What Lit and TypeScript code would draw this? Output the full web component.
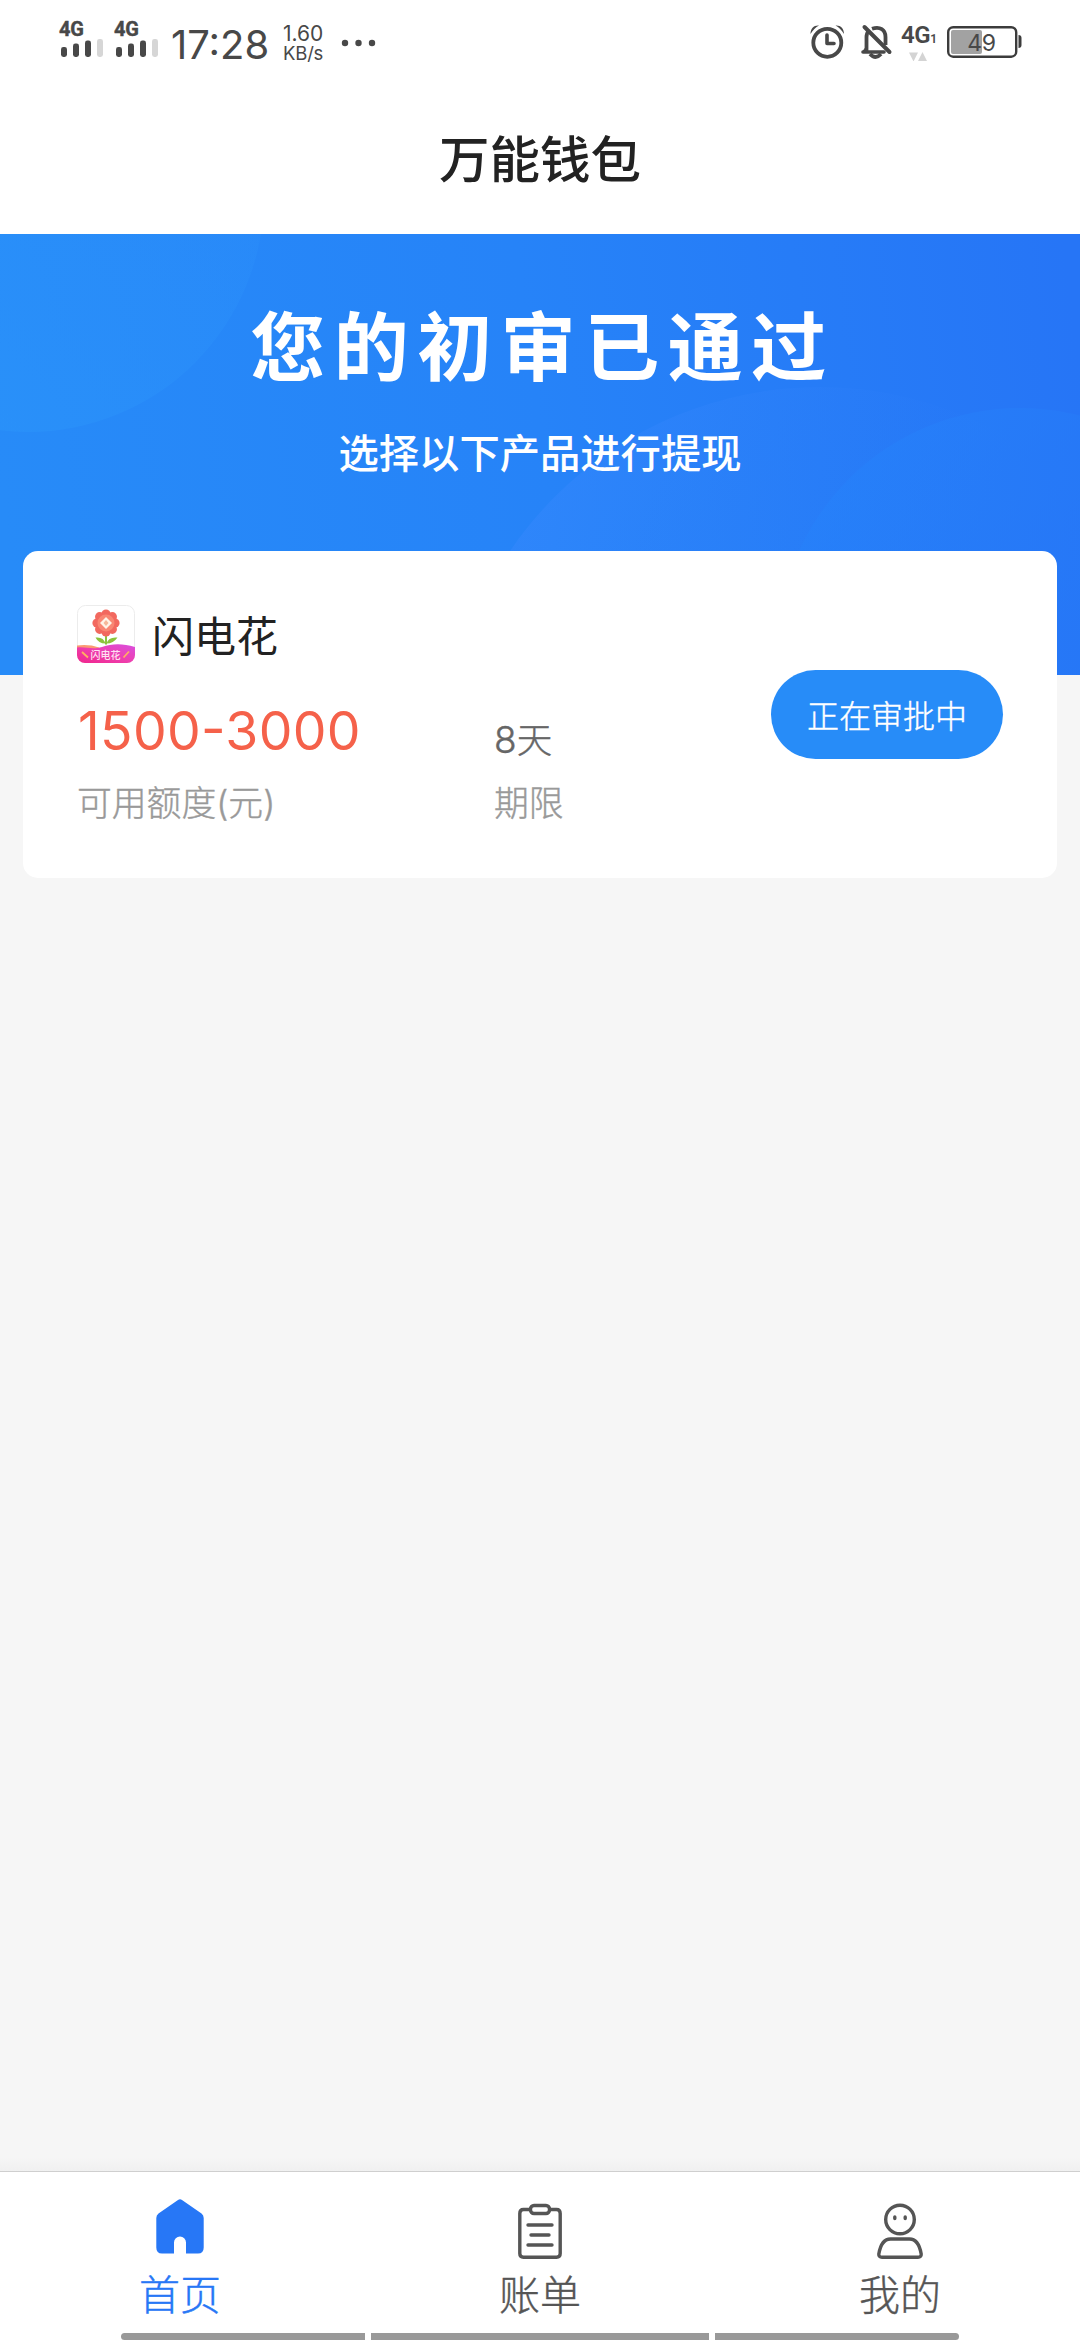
import { LitElement, html, css, svg } from "lit";
import { customElement, property } from "lit/decorators.js";

@customElement("status-bar")
class StatusBar extends LitElement {
  static styles = css`
    :host {
      display: flex;
      justify-content: space-between;
      height: 84px;
      padding: 0 58px 0 59px;
      box-sizing: border-box;
      color: #484848;
      font-family: Inter, Roboto, sans-serif;
    }
    .group { display: flex; align-items: flex-start; }
    svg { display: block; }
    .signals { display: flex; gap: 11px; padding-top: 20px; }
    .signal { width: 44px; }
    .net { font: 700 20px/19px Roboto, sans-serif; letter-spacing: -0.2px; -webkit-text-stroke: 0.4px #484848; }
    .time { margin: 24px 0 0 13px; width: 101px; font-size: 40px; line-height: 41px; letter-spacing: 0; white-space: nowrap; }
    .speed { margin: 24px 0 0 11px; width: 45px; font-size: 21px; line-height: 20px; white-space: nowrap; }
    .speed .unit { font-size: 18.5px; letter-spacing: -0.2px; line-height: 18px; }
    .dots { margin: 39px 0 0 12px; }
    .alarm { margin-top: 24px; }
    .bell { margin: 24px 0 0 15px; }
    .data { margin: 24px 0 0 8px; width: 36px; }
    .data .label { display: flex; align-items: baseline; font-size: 24px; line-height: 22px; font-weight: 600; font-family: Roboto, sans-serif; letter-spacing: -0.4px; }
    .data .sub { font-size: 12px; }
    .battery { margin: 25px 0 0 9px; }
    .battery text { font: 400 23px Inter, sans-serif; letter-spacing: -0.3px; }
  `;
  private signal() {
    return html`<div class="signal">
      <div class="net">4G</div>
      <svg width="44" height="20" viewBox="0 0 44 20">
        <g fill="#484848">
          <rect x="2" y="8" width="6" height="10" rx="2.4" />
          <rect x="14" y="4.500" width="6" height="13.500" rx="2.400" />
          <rect x="26" y="1.500" width="6" height="16.500" rx="2.400" />
        </g>
        <rect x="38" y="0" width="6" height="18" rx="2.400" fill="#d6d6d6" />
      </svg>
    </div>`;
  }
  render() {
    return html`
      <div class="group">
        <div class="signals">${this.signal()}${this.signal()}</div>
        <div class="time">17:28</div>
        <div class="speed"><div>1.60</div><div class="unit">KB/s</div></div>
        <svg class="dots" width="36" height="8" viewBox="0 0 36 8" fill="#484848">
          <circle cx="5" cy="4" r="3.200" /><circle cx="18.500" cy="4" r="3.200" /><circle cx="32" cy="4" r="3.200" />
        </svg>
      </div>
      <div class="group">
        <svg class="alarm" width="36" height="36" viewBox="0 0 36 36" fill="none" stroke="#484848">
          <circle cx="17.300" cy="18.800" r="14" stroke-width="3.800" />
          <path d="M17 11v8.500h7" stroke-width="3.600" stroke-linecap="round" stroke-linejoin="round" />
          <path d="M0.500 10C0.500 4.500 4 1 9 1.500C5.500 3.500 3 6 0.500 10zM34 10C34 4.500 30.500 1 25.500 1.500C29 3.500 31.500 6 34 10z" fill="#484848" stroke="none" />
        </svg>
        <svg class="bell" width="32" height="36" viewBox="0 0 32 36" fill="none" stroke="#484848">
          <path d="M5.500 28V13c0-3 1-5 2.500-6.500M11 4.800c8-2.800 13.500 1 13.500 8.200v8" stroke-width="3.800" />
          <path d="M2 28h21" stroke-width="3.600" stroke-linecap="round" />
          <path d="M2 27l4-5v5z" fill="#484848" stroke-width="1" />
          <path d="M9 30q5.500 6 11 0" stroke-width="3.800" />
          <path d="M3.500 3L28.500 28" stroke-width="4" stroke-linecap="round" />
        </svg>
        <div class="data">
          <div class="label">4G<span class="sub">1</span></div>
          <svg width="36" height="11" viewBox="0 0 36 11" fill="#d4d4d4">
            <path d="M8 2.500h9l-4.500 9zM17 11h9l-4.500-9z" />
          </svg>
        </div>
        <svg class="battery" width="76" height="34" viewBox="0 0 76 34">
          <rect x="2.200" y="2.200" width="68" height="29.500" rx="5" fill="none" stroke="#3c3c3c" stroke-width="2.400" />
          <rect x="5" y="5" width="31" height="24" rx="2" fill="#a2a2a2" />
          <path d="M72.500 10q3 0 3 3v7q0 3-3 3z" fill="#3c3c3c" />
          <text x="35.500" y="25.500" text-anchor="middle" fill="#484848">49</text>
        </svg>
      </div>
    `;
  }
}

@customElement("loan-card")
class LoanCard extends LitElement {
  @property() name = "";
  @property() amount = "";
  @property() days = "";
  @property() status = "";
  static styles = css`
    :host {
      display: flex;
      justify-content: space-between;
      height: 327px;
      box-sizing: border-box;
      padding: 54px 54px 0 54px;
      background: #fff;
      border-radius: 15px;
      font-family: "Noto Sans CJK SC", sans-serif;
    }
    .head { display: flex; align-items: center; height: 58px; gap: 17px; color: #222; }
    .logo { display: block; }
    .logo text { font: 500 10px "Noto Sans CJK SC", sans-serif; }
    .name { font-size: 42px; line-height: 58px; }
    .facts { display: grid; grid-template-columns: 417px 130px; }
    .value { display: flex; align-items: baseline; height: 60px; margin-top: 38px; line-height: 60px; }
    .amount { color: #f5614a; font: 400 53.500px/60px Inter, sans-serif; letter-spacing: 0.3px; font-feature-settings: "case" 1; padding-left: 1px; }
    .days { color: #666; font-size: 35.500px; font-weight: 300; line-height: 60px; padding-top: 7px; height: 53px; -webkit-text-stroke: 0.4px #666; }
    .num { font-family: Inter, sans-serif; font-size: 37px; }
    .label { color: #999; font-size: 34.800px; font-weight: 300; line-height: 40px; margin-top: 20px; white-space: nowrap; -webkit-text-stroke: 0.4px #999; }
    .paren { font-family: Inter, sans-serif; }
    .status {
      margin-top: 65px;
      width: 232px;
      height: 89px;
      padding: 0;
      border: 0;
      border-radius: 45px;
      background: #278cf8;
      color: #fff;
      font: 300 32px/89px "Noto Sans CJK SC", sans-serif;
      -webkit-text-stroke: 0.4px #fff;
    }
  `;
  render() {
    return html`
      <div>
        <div class="head">
          <svg class="logo" width="58" height="58" viewBox="0 0 58 58">
            <defs>
              <linearGradient id="wave" x1="0" y1="1" x2="1" y2="0">
                <stop offset="0" stop-color="#f0258c" /><stop offset="0.500" stop-color="#ee3fae" /><stop offset="1" stop-color="#d94fe0" />
              </linearGradient>
              <clipPath id="tile"><rect width="58" height="58" rx="8" /></clipPath>
            </defs>
            <rect x="0.500" y="0.500" width="57" height="57" rx="8" fill="#fff" stroke="#ececec" />
            <g clip-path="url(#tile)">
              <path d="M0 40.500q12-1.500 22 2v8H0z" fill="#fb9a72" />
              <path d="M0 42.500C10 41.500 15 45 25 42C35 38.500 45 38 58 42V58H0z" fill="url(#wave)" />
            </g>
            <path d="M29 30v9.500" stroke="#8cc43c" stroke-width="2" />
            <path d="M28.500 38.500q-7 0-10-6q8-1 10 6zM29.500 38.500q7 0 11-6q-9-1-11 6z" fill="#8cc43c" />
            <g fill="#f2695f">
              ${[0, 45, 90, 135, 180, 225, 270, 315].map(
                (a) => svg`<circle cx="29" cy="9" r="4.600" transform="rotate(${a} 29 18)" />`
              )}
              <circle cx="29" cy="18" r="10.500" />
            </g>
            <circle cx="29" cy="18" r="8.500" fill="#f98773" />
            <path d="M29 12l6 6l-6 6l-6-6z" fill="#fff4e8" />
            <path d="M29 15l2.500 3l-2.500 3l-2.500-3z" fill="#f6b899" />
            <path d="M5 47l6 5.500M52 46.500l-5.500 6" stroke="#ffb060" stroke-width="1.800" />
            <text x="28.500" y="53.500" text-anchor="middle" fill="#ffe0f2">闪电花</text>
          </svg>
          <div class="name">${this.name}</div>
        </div>
        <div class="facts">
          <div class="value amount">${this.amount}</div>
          <div class="value days"><span class="num">${this.days}</span>天</div>
          <div class="label">可用额度<span class="paren">(</span>元<span class="paren">)</span></div>
          <div class="label">期限</div>
        </div>
      </div>
      <button class="status">${this.status}</button>
    `;
  }
}

@customElement("tab-bar")
class TabBar extends LitElement {
  static styles = css`
    :host {
      display: grid;
      grid-template-columns: repeat(3, 1fr);
      position: relative;
      height: 169px;
      box-sizing: border-box;
      border-top: 1px solid #cfcfcf;
      background: #fff;
    }
    .tab {
      display: flex;
      flex-direction: column;
      align-items: center;
      padding-top: 24px;
      color: #555;
      font: 300 41px/50px "Noto Sans CJK SC", sans-serif;
      -webkit-text-stroke: 0.4px currentColor;
    }
    .tab svg { display: block; width: 60px; height: 68px; margin-bottom: 3px; }
    .active { color: #2777f6; }
    .gesture { position: absolute; left: 121px; bottom: 0; width: 838px; display: grid; grid-template-columns: 244px 338px 244px; gap: 6px; height: 7px; }
    .gesture i { background: #999; }
    .gesture i:first-child { border-radius: 4px 0 0 4px; }
    .gesture i:last-child { border-radius: 0 4px 4px 0; }
  `;
  render() {
    return html`
      <div class="tab active">
        <svg viewBox="0 0 60 68">
          <path d="M28 4Q30 2.300 32 4L51.500 17.500Q53.700 19 53.700 22V51.500Q53.700 57.500 48 57.500H36V46.500a6 6 0 0 0-12 0V57.500H12Q6.300 57.500 6.300 51.500V22Q6.300 19 8.500 17.500z" fill="#2777f6" />
        </svg>
        <span>首页</span>
      </div>
      <div class="tab">
        <svg viewBox="0 0 60 68" fill="none" stroke="#555" stroke-width="3.400" stroke-linecap="round">
          <path d="M20 13.500H13.500Q9.800 13.500 9.800 17.500V57.500Q9.800 61.200 13.500 61.200H46.500Q50.200 61.200 50.200 57.500V17.500Q50.200 13.500 46.500 13.500H40" />
          <rect x="20.500" y="9.500" width="19" height="8" rx="3.500" />
          <path d="M18 29h24M21 39h18M18 49h24" />
        </svg>
        <span>账单</span>
      </div>
      <div class="tab">
        <svg viewBox="0 0 60 68" fill="none" stroke="#555" stroke-width="3.400" stroke-linecap="round" stroke-linejoin="round">
          <circle cx="30" cy="23.500" r="14.300" />
          <path d="M24.800 21v1.500M35.200 21v1.500" />
          <path d="M20.500 43H39.500C46.500 43 49.800 50 51.200 58Q51.400 61.200 48 61.200H12Q8.600 61.200 8.800 58C10.200 50 13.500 43 20.500 43z" />
        </svg>
        <span>我的</span>
      </div>
      <div class="gesture"><i></i><i></i><i></i></div>
    `;
  }
}

@customElement("app-root")
class AppRoot extends LitElement {
  static styles = css`
    :host {
      display: flex;
      flex-direction: column;
      height: 2340px;
      background: #f6f6f6;
      font-family: "Noto Sans CJK SC", sans-serif;
    }
    .top { background: #fff; height: 234px; }
    .title { text-align: center; font-size: 50.500px; font-weight: 500; line-height: 60px; color: #222; padding-top: 42px; }
    .banner { display: grid; height: 441px; color: #fff; }
    .art, .copy { grid-area: 1 / 1; }
    .art { display: block; }
    .copy { display: flex; flex-direction: column; align-items: center; }
    .headline { font-size: 75px; font-weight: 700; letter-spacing: 8.500px; line-height: 90px; margin-top: 64px; padding-left: 5px; }
    .sub { font-size: 40.300px; font-weight: 500; line-height: 50px; margin-top: 38px; }
    .main { flex: 1; }
    .card { margin: -124px 23px 0; }
    .fade { height: 14px; background: linear-gradient(#f6f6f6, #f0f0f0); }
  `;
  render() {
    return html`
      <header class="top">
        <status-bar></status-bar>
        <div class="title">万能钱包</div>
      </header>
      <section class="banner">
        <svg class="art" width="1080" height="441" viewBox="0 234 1080 441">
          <defs>
            <linearGradient id="sky" gradientUnits="userSpaceOnUse" x1="0" y1="500" x2="1080" y2="360">
              <stop offset="0" stop-color="#278bf8" /><stop offset="0.500" stop-color="#2683f8" /><stop offset="1" stop-color="#2675f6" />
            </linearGradient>
            <linearGradient id="c1" x1="0" y1="1" x2="0.800" y2="0.300">
              <stop offset="0" stop-color="#2b98fa" stop-opacity="0.600" /><stop offset="1" stop-color="#2b8ffa" stop-opacity="0.350" />
            </linearGradient>
            <linearGradient id="c2" x1="0" y1="0" x2="0.700" y2="0.250">
              <stop offset="0" stop-color="#3a8cff" stop-opacity="0.600" /><stop offset="1" stop-color="#2c7cf8" stop-opacity="0" />
            </linearGradient>
            <linearGradient id="c3" x1="0" y1="0" x2="0.800" y2="0.500">
              <stop offset="0" stop-color="#2684fb" stop-opacity="0.700" /><stop offset="1" stop-color="#2676f6" stop-opacity="0.400" />
            </linearGradient>
          </defs>
          <rect y="234" width="1080" height="441" fill="url(#sky)" />
          <circle cx="28" cy="196" r="236" fill="url(#c1)" />
          <circle cx="820" cy="762" r="375" fill="url(#c2)" />
          <circle cx="1020" cy="650" r="242" fill="url(#c3)" />
        </svg>
        <div class="copy">
          <div class="headline">您的初审已通过</div>
          <div class="sub">选择以下产品进行提现</div>
        </div>
      </section>
      <main class="main">
        <loan-card class="card" name="闪电花" amount="1500-3000" days="8" status="正在审批中"></loan-card>
      </main>
      <div class="fade"></div>
      <tab-bar></tab-bar>
    `;
  }
}
